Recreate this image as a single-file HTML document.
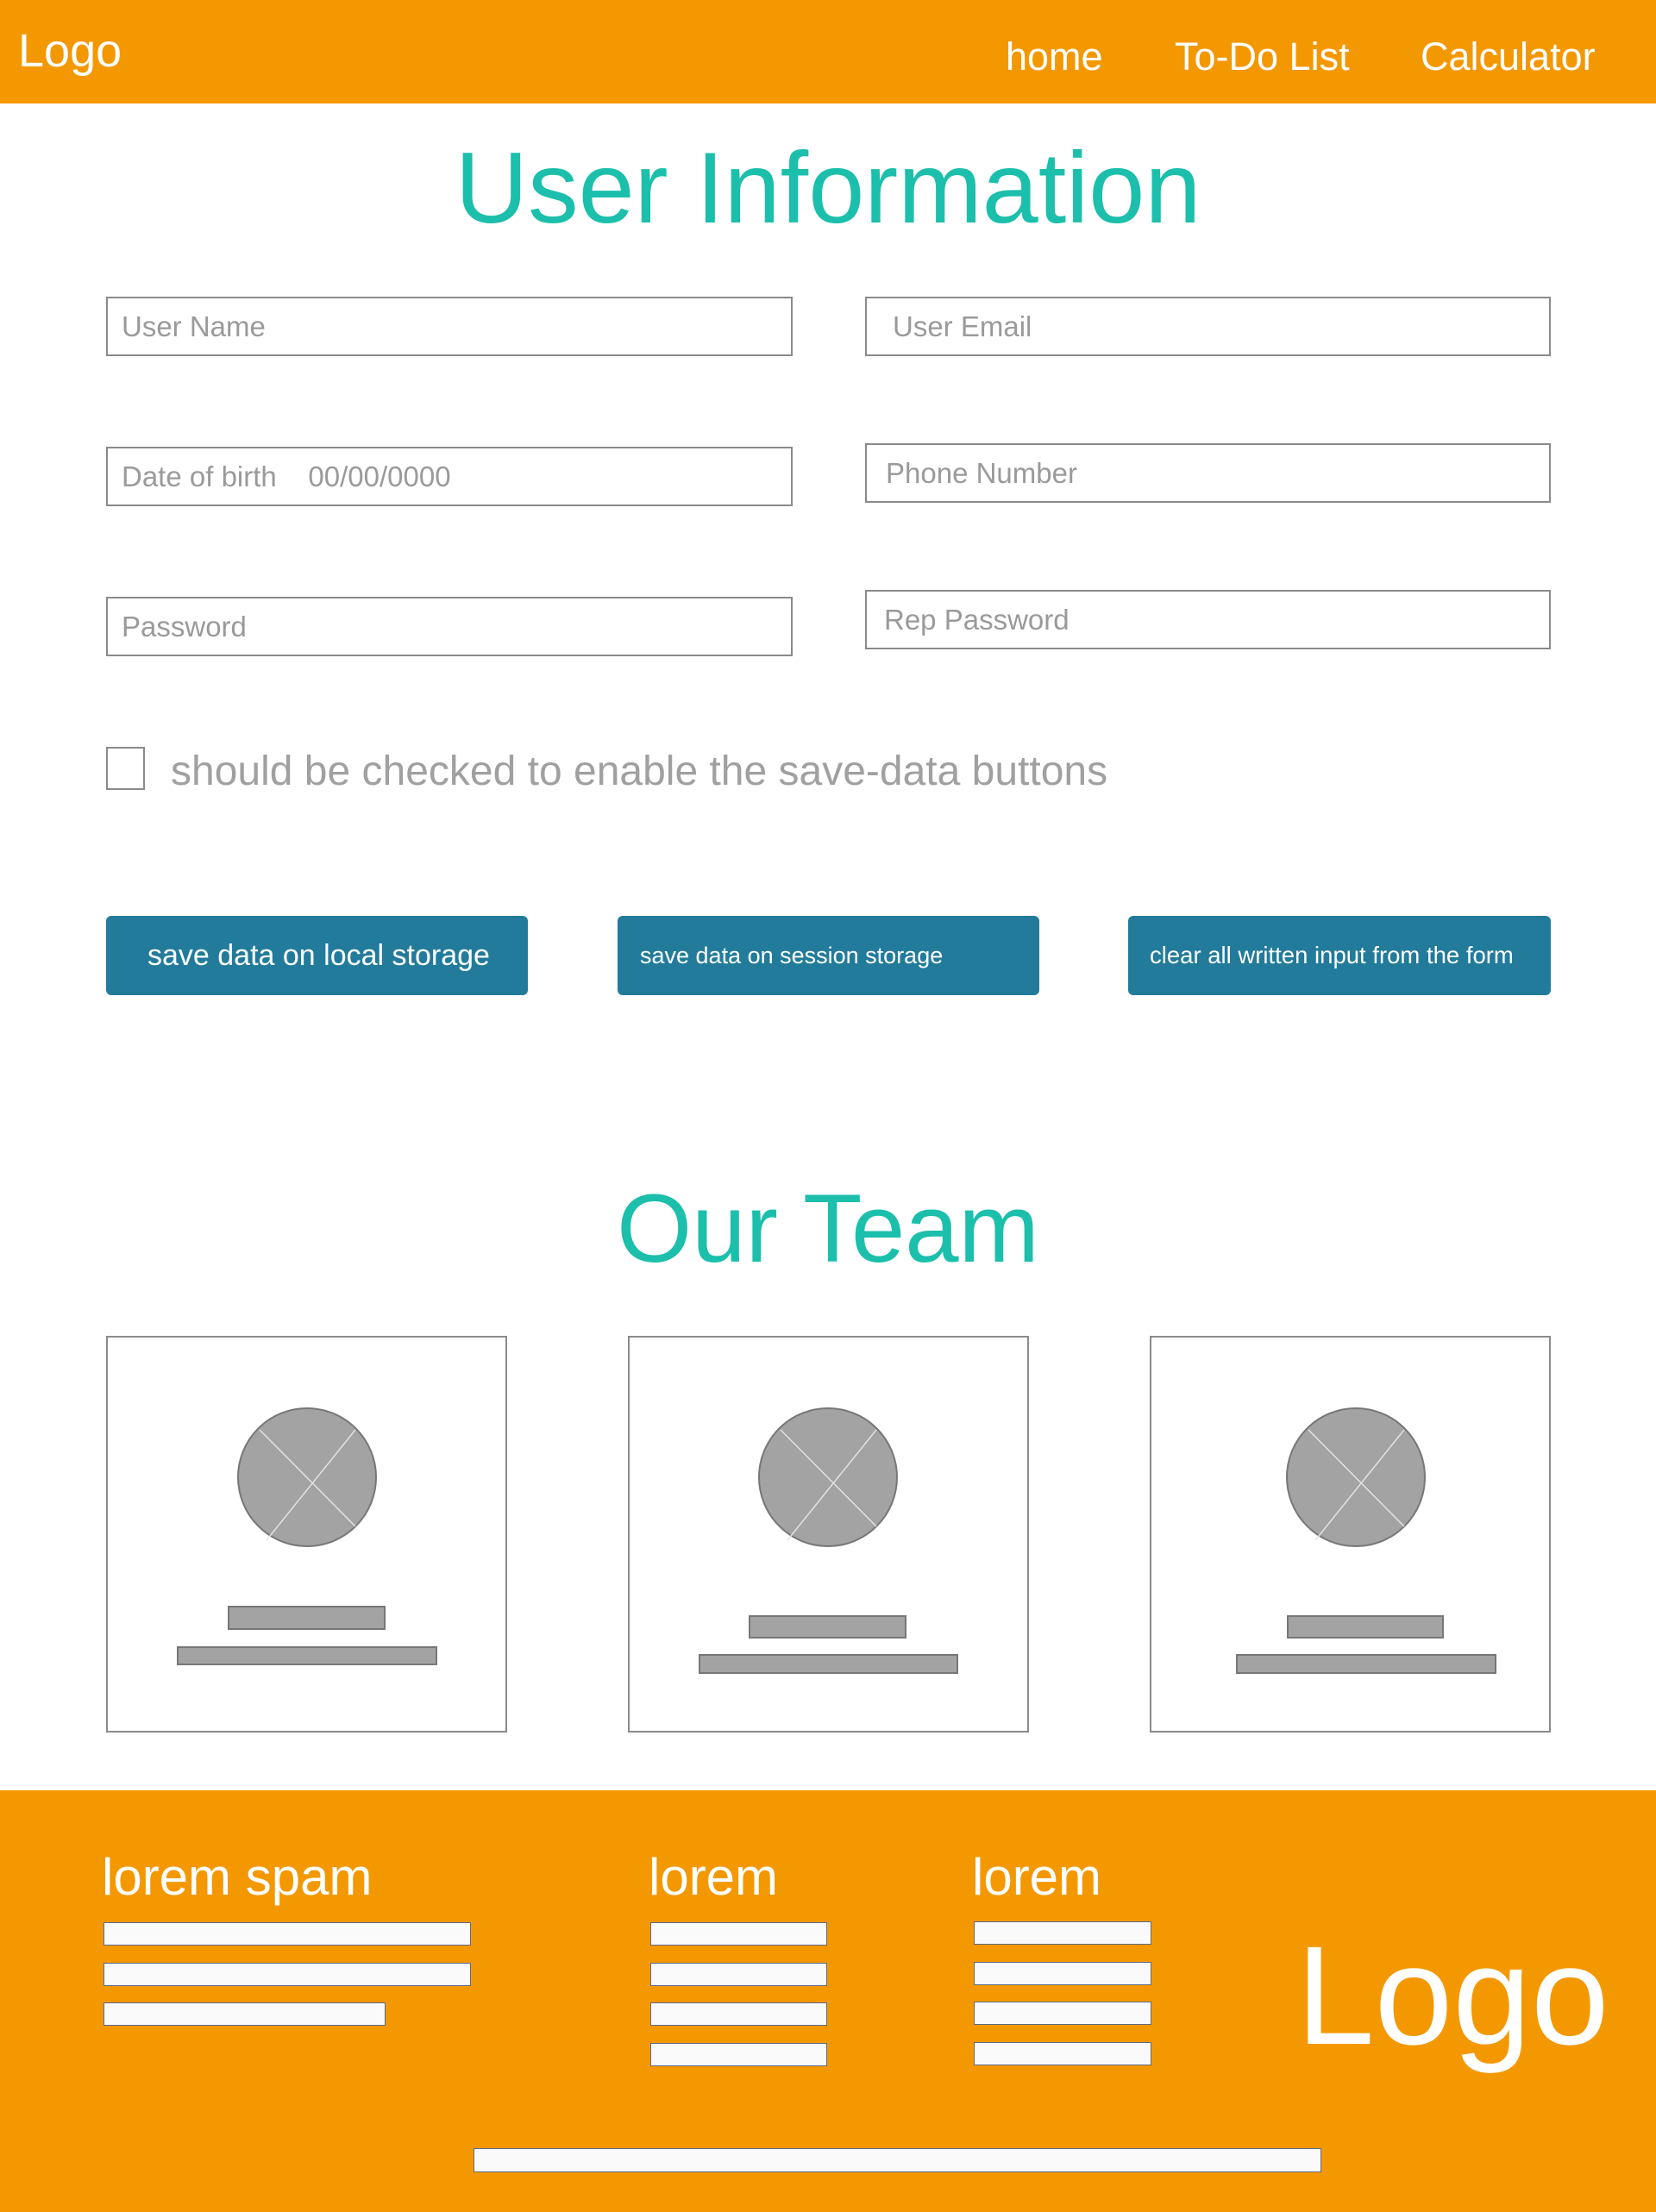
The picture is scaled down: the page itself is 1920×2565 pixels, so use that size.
<!DOCTYPE html>
<html><head><meta charset="utf-8">
<style>
*{margin:0;padding:0;box-sizing:border-box}
body{width:1920px;height:2565px;position:relative;background:#fff;font-family:"Liberation Sans",sans-serif;overflow:hidden}
.a{position:absolute}
.hdr{left:0;top:0;width:1920px;height:120px;background:#f49802}
.w{color:#fff;white-space:nowrap}
.inp{border:2px solid #8a8a8a;background:#fff;color:#9a9a9a;font-size:33px;padding-left:16px;display:flex;align-items:center;white-space:nowrap}
.btn{background:#227b9b;border-radius:6px;color:#fff;display:flex;align-items:center;white-space:nowrap}
.ttl{color:#1bbfab;width:1920px;text-align:center;white-space:nowrap}
.card{border:2px solid #8a8a8a;background:#fff}
.gb{background:#a4a3a3;border:2px solid #777}
.fb{background:#fafafa;border:1.5px solid #5a6a8a}
</style></head><body>
<div class="a hdr"></div>
<div class="a w" style="left:21px;top:28px;font-size:54px">Logo</div>
<div class="a w" style="left:1166px;top:40px;font-size:45px">home</div>
<div class="a w" style="left:1362px;top:40px;font-size:45px">To-Do List</div>
<div class="a w" style="left:1647px;top:40px;font-size:45px">Calculator</div>

<div class="a ttl" style="left:0;top:150px;font-size:117px">User Information</div>

<div class="a inp" style="left:123px;top:344px;width:796px;height:69px">User Name</div>
<div class="a inp" style="left:1003px;top:344px;width:795px;height:69px;padding-left:30px">User Email</div>
<div class="a inp" style="left:123px;top:518px;width:796px;height:69px">Date of birth&nbsp;&nbsp;&nbsp;&nbsp;00/00/0000</div>
<div class="a inp" style="left:1003px;top:514px;width:795px;height:69px;padding-left:22px">Phone Number</div>
<div class="a inp" style="left:123px;top:692px;width:796px;height:69px">Password</div>
<div class="a inp" style="left:1003px;top:684px;width:795px;height:69px;padding-left:20px">Rep Password</div>

<div class="a" style="left:123px;top:866px;width:45px;height:50px;border:2px solid #8a8a8a"></div>
<div class="a" style="left:198px;top:867px;font-size:48px;color:#a0a0a0;white-space:nowrap">should be checked to enable the save-data buttons</div>

<div class="a btn" style="left:123px;top:1062px;width:489px;height:92px;padding-left:48px;font-size:34px">save data on local storage</div>
<div class="a btn" style="left:716px;top:1062px;width:489px;height:92px;padding-left:26px;font-size:27px">save data on session storage</div>
<div class="a btn" style="left:1308px;top:1062px;width:490px;height:92px;padding-left:25px;font-size:27.5px">clear all written input from the form</div>

<div class="a ttl" style="left:0;top:1360px;font-size:112px">Our Team</div>

<div class="a card" style="left:123px;top:1549px;width:465px;height:460px"></div>
<div class="a card" style="left:728px;top:1549px;width:465px;height:460px"></div>
<div class="a card" style="left:1333px;top:1549px;width:465px;height:460px"></div>

<svg class="a" style="left:0;top:1600px" width="1920" height="240">
<g fill="#a4a3a3" stroke="#777" stroke-width="2">
<circle cx="356" cy="113" r="80"/><circle cx="960" cy="113" r="80"/><circle cx="1572" cy="113" r="80"/>
</g>
<g stroke="#e2e2e2" stroke-width="1.5">
<path d="M301 58L412 170M412 58L309 186"/>
<path d="M905 58L1016 170M1016 58L913 186"/>
<path d="M1517 58L1628 170M1628 58L1525 186"/>
</g>
</svg>

<div class="a gb" style="left:264px;top:1862px;width:183px;height:28px"></div>
<div class="a gb" style="left:205px;top:1909px;width:302px;height:22px"></div>
<div class="a gb" style="left:868px;top:1873px;width:183px;height:27px"></div>
<div class="a gb" style="left:810px;top:1918px;width:301px;height:23px"></div>
<div class="a gb" style="left:1492px;top:1873px;width:182px;height:27px"></div>
<div class="a gb" style="left:1433px;top:1918px;width:302px;height:23px"></div>

<div class="a" style="left:0;top:2076px;width:1920px;height:489px;background:#f49802"></div>
<div class="a w" style="left:118px;top:2142px;font-size:60px">lorem spam</div>
<div class="a w" style="left:752px;top:2142px;font-size:60px">lorem</div>
<div class="a w" style="left:1127px;top:2142px;font-size:60px">lorem</div>

<div class="a fb" style="left:120px;top:2229px;width:426px;height:27px"></div>
<div class="a fb" style="left:120px;top:2276px;width:426px;height:27px"></div>
<div class="a fb" style="left:120px;top:2322px;width:327px;height:27px"></div>

<div class="a fb" style="left:754px;top:2229px;width:205px;height:27px"></div>
<div class="a fb" style="left:754px;top:2276px;width:205px;height:27px"></div>
<div class="a fb" style="left:754px;top:2322px;width:205px;height:27px"></div>
<div class="a fb" style="left:754px;top:2369px;width:205px;height:27px"></div>

<div class="a fb" style="left:1129px;top:2228px;width:206px;height:27px"></div>
<div class="a fb" style="left:1129px;top:2275px;width:206px;height:27px"></div>
<div class="a fb" style="left:1129px;top:2321px;width:206px;height:27px"></div>
<div class="a fb" style="left:1129px;top:2368px;width:206px;height:27px"></div>

<div class="a w" style="left:1503px;top:2232px;font-size:163px;line-height:1">Logo</div>

<div class="a fb" style="left:549px;top:2491px;width:983px;height:28px"></div>
</body></html>
